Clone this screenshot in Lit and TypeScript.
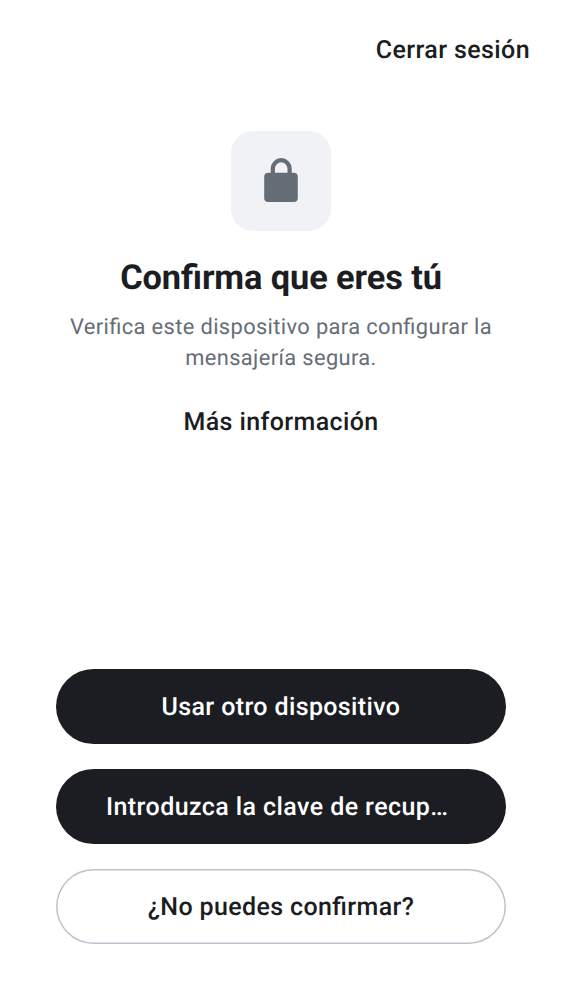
import { LitElement, html, css } from "lit";
import { customElement } from "lit/decorators.js";

@customElement("app-root")
export class AppRoot extends LitElement {
  static styles = css`
    :host { display: flex; flex-direction: column; box-sizing: border-box; height: 1000px; background: #fff; color: #1b1d22; font-family: Roboto, sans-serif; font-feature-settings: "liga" 1; text-rendering: geometricPrecision; }
    * { box-sizing: border-box; }
    button { font: inherit; font-feature-settings: inherit; text-rendering: inherit; color: inherit; background: none; border: 0; padding: 0; margin: 0; white-space: nowrap; }
    header { display: flex; justify-content: flex-end; padding: 35px 32px 0; }
    .link { font-size: 25px; font-weight: 500; line-height: 32px; letter-spacing: 0.39px; }
    main { display: flex; flex-direction: column; align-items: center; padding-top: 64px; text-align: center; }
    .tile { width: 100px; height: 100px; border-radius: 22px; background: #f0f2f5; }
    .tile svg { display: block; width: 100px; height: 100px; }
    h1 { margin: 25px 0 0; font-size: 34.375px; line-height: 44px; font-weight: 700; letter-spacing: -0.1px; }
    p { margin: 12px 0 33px; font-size: 21.875px; line-height: 31px; letter-spacing: 0.37px; color: #656d77; }
    footer { margin-top: auto; padding: 0 56px 56px; display: flex; flex-direction: column; gap: 25px; }
    .btn { display: block; width: 100%; height: 75px; border-radius: 38px; padding: 1px 50px 0; font-size: 25px; font-weight: 500; letter-spacing: 0.37px; background: #1b1d22; color: #fff; }
    .start { text-align: left; letter-spacing: 0.42px; }
    .outline { background: #fff; color: #1b1d22; box-shadow: inset 0 0 0 1.5px #bdc3cd; }
  `;

  render() {
    return html`
      <header><button class="link">Cerrar sesión</button></header>
      <main>
        <div class="tile">
          <svg viewBox="0 0 100 100" fill="none">
            <path d="M41.8 44v-6.4a8.4 8.4 0 0 1 16.8 0V44" stroke="#656d77" stroke-width="4.2" />
            <rect x="33.2" y="41.8" width="33.6" height="29.2" rx="4.1" fill="#656d77" />
          </svg>
        </div>
        <h1>Confirma que eres tú</h1>
        <p>Verifica este dispositivo para configurar la<br />mensajería segura.</p>
        <button class="link">Más información</button>
      </main>
      <footer>
        <button class="btn">Usar otro dispositivo</button>
        <button class="btn start">Introduzca la clave de recup…</button>
        <button class="btn outline">¿No puedes confirmar?</button>
      </footer>
    `;
  }
}
